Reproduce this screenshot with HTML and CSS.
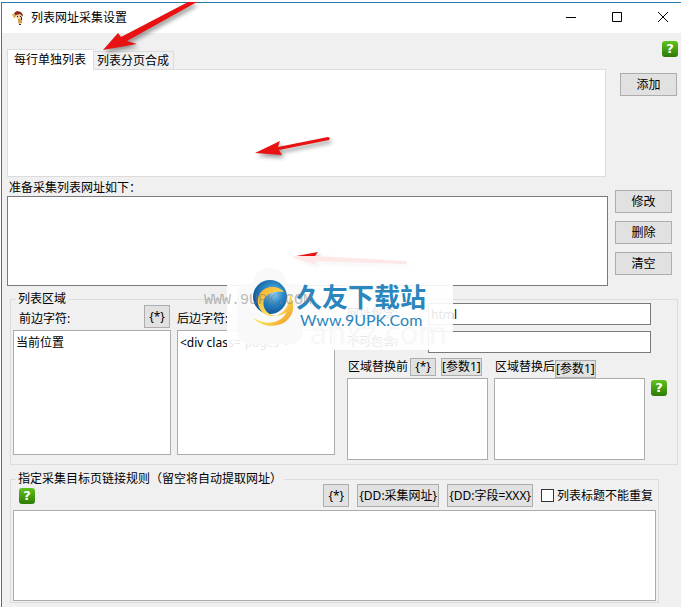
FILE: index.html
```html
<!DOCTYPE html>
<html lang="zh-CN">
<head>
    <meta charset="UTF-8">
    <meta name="viewport" content="width=device-width, initial-scale=1.0">
    <title>列表网址采集设置</title>
    <link rel="stylesheet" href="styles.css">
</head>
<body>
    <div class="window">
        <header class="titlebar">
            <svg class="app-icon" width="14" height="16" viewBox="0 0 14 16" aria-hidden="true">
                <path d="M3 3 6 1l4 1 2 3-1 2-2-2-4 1-1-1z" fill="#8c2a1c"/>
                <path d="M5 5l4-1 2 2-1 4-3-1-2-2z" fill="#f6cfa0"/>
                <path d="M6 6h1v1H6zM9 6h1v1H9z" fill="#222"/>
                <path d="M1 4l2 0 2 3-2 1z" fill="#e2a13a"/>
                <path d="M7 9l4 0 0 4-3 1-1-2z" fill="#d8a048"/>
                <path d="M10 7h1v3h-1zM8 14h2v1H8z" fill="#5c2a12"/>
            </svg>
            <h1>列表网址采集设置</h1>
            <div class="window-buttons">
                <button type="button" aria-label="最小化"><svg width="12" height="12"><path d="M1 5.500h10"/></svg></button>
                <button type="button" aria-label="最大化"><svg width="12" height="12"><path d="M1.500 .5h9v9h-9z"/></svg></button>
                <button type="button" aria-label="关闭"><svg width="12" height="12"><path d="M1 0l10 10M11 0 1 10"/></svg></button>
            </div>
        </header>

        <main>
            <section class="row source">
                <div class="tabs">
                    <div class="tab-list" role="tablist">
                        <button type="button" class="tab active" role="tab" aria-selected="true">每行单独列表</button>
                        <button type="button" class="tab" role="tab" aria-selected="false">列表分页合成</button>
                    </div>
                    <textarea class="tab-panel" aria-label="每行单独列表"></textarea>
                </div>
                <div class="side">
                    <button type="button" class="help" aria-label="帮助">?</button>
                    <button type="button" class="btn">添加</button>
                </div>
            </section>

            <section class="row pending">
                <div class="field">
                    <label for="urls">准备采集列表网址如下：</label>
                    <textarea id="urls" class="dark"></textarea>
                </div>
                <div class="side">
                    <button type="button" class="btn">修改</button>
                    <button type="button" class="btn">删除</button>
                    <button type="button" class="btn">清空</button>
                </div>
            </section>

            <fieldset class="region">
                <legend>列表区域</legend>
                <div class="region-body">
                    <div class="field part">
                        <div class="field-head">
                            <label for="before">前边字符:</label>
                            <button type="button" class="btn tag">{*}</button>
                        </div>
                        <textarea id="before">当前位置</textarea>
                    </div>
                    <div class="field part">
                        <div class="field-head">
                            <label for="after">后边字符:</label>
                        </div>
                        <textarea id="after">&lt;div class="pages"&gt;</textarea>
                    </div>
                    <div class="filters">
                        <div class="filter">
                            <label for="include">网址包含:</label>
                            <input type="text" id="include" value="html">
                        </div>
                        <div class="filter">
                            <label for="exclude">不可包含:</label>
                            <input type="text" id="exclude">
                        </div>
                        <div class="replace">
                            <div class="field">
                                <div class="replace-head">
                                    <label for="from">区域替换前</label>
                                    <button type="button" class="btn small star">{*}</button>
                                    <button type="button" class="btn small">[参数1]</button>
                                </div>
                                <textarea id="from"></textarea>
                            </div>
                            <div class="field wide">
                                <div class="replace-head">
                                    <label for="to">区域替换后</label>
                                    <button type="button" class="btn small">[参数1]</button>
                                </div>
                                <textarea id="to"></textarea>
                            </div>
                        </div>
                    </div>
                    <button type="button" class="help" aria-label="帮助">?</button>
                </div>
            </fieldset>

            <fieldset class="rules">
                <legend>指定采集目标页链接规则（留空将自动提取网址）</legend>
                <div class="rules-bar">
                    <button type="button" class="help" aria-label="帮助">?</button>
                    <button type="button" class="btn tag">{*}</button>
                    <button type="button" class="btn">{DD:采集网址}</button>
                    <button type="button" class="btn">{DD:字段=XXX}</button>
                    <label class="check"><input type="checkbox">列表标题不能重复</label>
                </div>
                <textarea aria-label="链接规则"></textarea>
            </fieldset>
        </main>
    </div>

    <svg class="arrows" width="420" height="280" viewBox="0 0 420 280" aria-hidden="true">
        <path d="M103 50 118 33 121 37 188 2h9L127 41l10 3z"/>
        <path d="M255 153 280 141 278 147 328 137Q331 138 329 140L279 150l3 5z"/>
        <path d="M291 257 318 252 315 256 406 261Q408 263 406 264L315 261l2 4z"/>
    </svg>

    <div class="watermark">
        <svg class="bag" width="226" height="94" viewBox="0 0 226 94" aria-hidden="true">
            <path d="M22 28q-12 0-12 12v34q0 14 14 14h38q14 0 14-14V40q0-12-12-12h-4q-2-16-17-16T26 28z" fill="#f9f9f9"/>
        </svg>
        <span class="ghost">anxz.com</span>
        <svg class="globe" width="44" height="48" viewBox="0 0 44 48" aria-hidden="true">
            <defs>
                <radialGradient id="ball" cx=".6" cy=".4" r=".6">
                    <stop offset="0" stop-color="#8fd0f2"/>
                    <stop offset=".5" stop-color="#2a86c4"/>
                    <stop offset="1" stop-color="#14599c"/>
                </radialGradient>
                <linearGradient id="ring" x1="0" y1="0" x2="1" y2="1">
                    <stop offset="0" stop-color="#f5a623"/>
                    <stop offset=".55" stop-color="#fbe25a"/>
                    <stop offset="1" stop-color="#f08c1a"/>
                </linearGradient>
            </defs>
            <circle cx="18" cy="17" r="17" fill="url(#ball)"/>
            <path d="M32 12C26 5 12 5 7 15c-4 10 2 20 12 21 10 1 18-7 19-22 6 13 3 22-5 28-9 6-23 5-32-4 9 5 17 6 24 3 6-3 8-5 9-9-6 5-13 5-19 0-7-7-5-23 17-20z" fill="url(#ring)"/>
        </svg>
        <div class="brand">
            <strong>久友下载站</strong>
            <span>Www.9UPK.Com</span>
        </div>
    </div>
    <span class="site-stamp">WWW.9UPK.COM</span>
</body>
</html>
```

FILE: styles.css
```css
* {
    box-sizing: border-box;
}
body {
    position: relative;
    margin: 0;
    padding: 2px 0 0 1px;
    background: #fff;
    color: #000;
    font: 12px/16px "Noto Sans", "Noto Sans CJK SC", sans-serif;
}
button,
input,
textarea {
    font: inherit;
    color: inherit;
    margin: 0;
}
.window {
    border-top: 1px solid #2b7db0;
    border-left: 1px solid #2b7db0;
    background: #f0f0f0;
}
.titlebar {
    display: flex;
    align-items: center;
    height: 30px;
    padding-left: 9px;
    background: #fff;
}
.titlebar h1 {
    flex: 1;
    margin: 0 0 0 6px;
    font-size: 12px;
    font-weight: normal;
}
.window-buttons {
    display: flex;
}
.window-buttons button {
    width: 46px;
    height: 28px;
    padding: 0 0 0 9px;
    border: 0;
    background: none;
}
.window-buttons svg {
    display: block;
    margin: auto;
    fill: none;
    stroke: #000;
}
main {
    padding: 8px 0 4px;
}
textarea {
    display: block;
    width: 100%;
    padding: 4px 2px;
    border: 1px solid #acacac;
    border-radius: 0;
    background: #fff;
    resize: none;
}
textarea.dark {
    border-color: #7a7a7a;
    height: 90px;
}
label {
    white-space: nowrap;
}
.row {
    display: flex;
}
.source {
    padding: 0 3px 0 5px;
}
.tabs {
    flex: 1;
    padding-top: 8px;
}
.tab-list {
    display: flex;
    align-items: flex-end;
}
.tab {
    height: 18px;
    padding: 0 4px 0 3px;
    border: 1px solid #dcdcdc;
    border-bottom: 0;
    background: #f0f0f0;
    line-height: 17px;
}
.tab.active {
    height: 21px;
    padding: 0 7px 0 6px;
    margin-bottom: -1px;
    border-right: 0;
    background: #fff;
    line-height: 18px;
    z-index: 1;
}
.tab-panel {
    height: 108px;
    border-color: #dcdcdc;
}
.side {
    display: flex;
    flex-direction: column;
    align-items: flex-end;
    gap: 8px;
}
.source .side {
    gap: 16px;
    width: 72px;
}
.source .side .btn {
    margin-right: 1px;
}
.btn {
    height: 23px;
    padding: 0 1px;
    border: 1px solid #adadad;
    background: #e1e1e1;
    white-space: nowrap;
}
.side .btn {
    width: 57px;
}
.help {
    width: 16px;
    height: 16px;
    padding: 0;
    border: 0;
    border-radius: 3px;
    background: linear-gradient(#5fc41c, #2e7a05);
    color: #fff;
    font: bold 13px/16px "DejaVu Sans", sans-serif;
    text-align: center;
}
.pending {
    padding: 3px 9px 0 5px;
}
.pending .field {
    flex: 1;
}
.pending label {
    display: block;
    padding-left: 2px;
}
.pending .side {
    width: 64px;
    padding-top: 10px;
}
fieldset {
    min-width: 0;
    margin: 0 3px 0 8px;
    padding: 0 2px 2px;
    border: 1px solid #dcdcdc;
}
legend {
    margin-left: 3px;
    padding: 0 2px;
    line-height: 12px;
}
.region {
    margin-top: 7px;
}
.region-body {
    display: flex;
    margin-top: -2px;
    padding: 0 8px 2px 0;
}
.part {
    flex: 158;
    min-width: 0;
    margin-right: 6px;
    padding-top: 2px;
}
.part textarea {
    height: 125px;
}
.field-head {
    display: flex;
    align-items: center;
    justify-content: space-between;
    height: 25px;
    padding: 0 1px 2px 6px;
}
.field-head label {
    padding-top: 4px;
}
.part + .part .field-head {
    padding-left: 0;
}
.tag {
    width: 26px;
}
.filters {
    flex: 304;
    min-width: 0;
    margin-left: 6px;
}
.filter {
    display: flex;
    align-items: center;
    margin-bottom: 6px;
}
.filter label {
    width: 81px;
}
.filter input {
    flex: 1;
    min-width: 0;
    height: 22px;
    padding: 0 2px;
    border: 1px solid #7a7a7a;
}
.replace {
    display: flex;
    gap: 6px;
    padding-right: 6px;
}
.replace .field {
    flex: 141;
    min-width: 0;
}
.replace .wide {
    flex: 151;
}
.replace textarea {
    height: 82px;
}
.replace-head {
    display: flex;
    align-items: center;
    height: 19px;
    padding: 0 0 4px 1px;
}
.small {
    height: 18px;
    padding: 0;
    line-height: 16px;
}
.replace-head .star {
    width: 26px;
    margin: 0 5px 0 2px;
}
.wide .small {
    margin-top: 4px;
}
.region .help {
    margin-top: 77px;
}
.rules {
    margin: 8px 22px 0 8px;
    padding-bottom: 1px;
}
.rules-bar {
    display: flex;
    align-items: center;
    gap: 8px;
    height: 26px;
    margin-top: -1px;
    padding: 0 3px 3px 6px;
}
.rules-bar .help {
    margin-right: auto;
}
.check {
    display: flex;
    align-items: center;
    gap: 3px;
}
.check input {
    appearance: none;
    width: 13px;
    height: 13px;
    border: 1px solid #333;
    background: #fff;
}
.rules textarea {
    height: 91px;
}

/* red pointers lying over the form */
.arrows {
    position: absolute;
    top: 0;
    left: 0;
    fill: #e81212;
    filter: drop-shadow(2px 3px 2px rgba(0, 0, 0, 0.4));
    pointer-events: none;
}

/* site watermark */
.watermark {
    position: absolute;
    top: 256px;
    left: 227px;
    width: 226px;
    height: 94px;
    background: rgba(255, 255, 255, 0.9);
    pointer-events: none;
}
.bag {
    position: absolute;
    top: 0;
    left: 0;
}
.ghost {
    position: absolute;
    right: 6px;
    bottom: 0;
    color: #f7f7f7;
    font: 31px/36px "Open Sans", sans-serif;
}
.globe {
    position: absolute;
    top: 24px;
    left: 25px;
}
.brand {
    position: absolute;
    top: 25px;
    left: 69px;
    color: #2a86bd;
}
.brand strong,
.brand span {
    display: block;
    white-space: nowrap;
}
.brand strong {
    font: bold 26px/30px "Noto Sans CJK SC", sans-serif;
}
.brand span {
    padding-left: 4px;
    font: 16px/18px Lato, sans-serif;
}
.site-stamp {
    position: absolute;
    top: 293px;
    left: 204px;
    color: rgba(120, 120, 120, 0.5);
    font: 15px/16px "Liberation Mono", monospace;
    pointer-events: none;
}
```
